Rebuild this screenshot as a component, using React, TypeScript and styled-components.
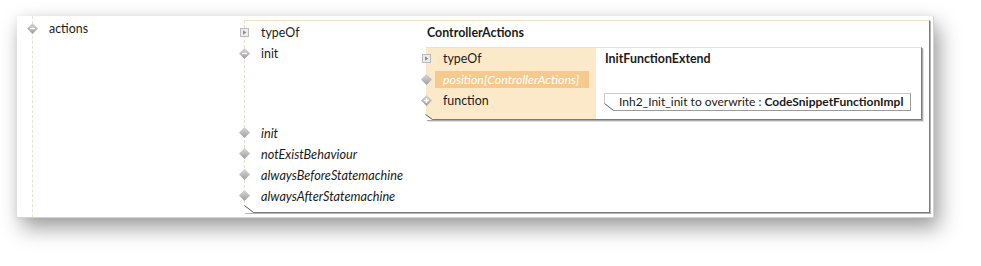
import styled, { createGlobalStyle } from 'styled-components';

const GlobalStyle = createGlobalStyle`
  html, body { margin: 0; padding: 0; background: #fff; }
  body {
    font-family: Lato, "Open Sans", sans-serif;
    font-size: 12.4px;
    color: #1b1b1b;
  }
`;

type Mark = 'minus' | 'plus' | 'none';

const IconBox = styled.span<{ $gap: number }>`
  display: flex;
  flex: none;
  width: 11px;
  height: 11px;
  margin-right: ${p => p.$gap}px;
`;

const Diamond = ({ mark = 'none' }: { mark?: Mark }) => (
  <svg width="11" height="11" viewBox="0 0 11 11">
    <defs>
      <linearGradient id="dia" x1="0" y1="0" x2="0" y2="1">
        <stop offset="0" stopColor="#d6d6d6" />
        <stop offset="0.5" stopColor="#bdbdbd" />
        <stop offset="1" stopColor="#9a9a9a" />
      </linearGradient>
    </defs>
    <polygon points="5.5,0 11,5.5 5.5,11 0,5.5" fill="url(#dia)" />
    {mark !== 'none' && <rect x="3" y="4.8" width="5" height="1.4" fill="#fff" />}
    {mark === 'plus' && <rect x="4.8" y="3" width="1.4" height="5" fill="#fff" />}
  </svg>
);

const TypeIcon = () => (
  <svg width="11" height="11" viewBox="0 0 11 11">
    <rect x="1.5" y="1.5" width="8" height="8" fill="#ececec" stroke="#bababa" />
    <polygon points="4,3.2 7.4,5.5 4,7.8" fill="#8e8e8e" />
  </svg>
);

const CornerSvg = styled.svg`
  position: absolute;
  left: -1px;
  bottom: -1px;
`;

const Corner = ({ w, h }: { w: number; h: number }) => (
  <CornerSvg width={w + 1} height={h + 1}>
    <polygon points={`0,0 ${w + 1},${h + 1} 0,${h + 1}`} fill="#fff" />
    <line x1="0.5" y1="0.5" x2={w + 0.5} y2={h + 0.5} stroke="#5c5c5c" />
  </CornerSvg>
);

const Page = styled.div`
  width: 981px;
  height: 266px;
  box-sizing: border-box;
  padding: 16px 0 0 17px;
  overflow: hidden;
`;

const Frame = styled.div`
  display: flex;
  width: 917px;
  height: 202px;
  box-sizing: border-box;
  padding-right: 3px;
  background: #fff;
  border-right: 1px solid #d4d4d4;
  border-bottom: 1px solid #d4d4d4;
  box-shadow: 5px 10px 20px rgba(0, 0, 0, 0.38), 0 0 10px rgba(0, 0, 0, 0.06);
`;

const Outline = styled.div`
  display: flex;
  flex: none;
  width: 227px;
  box-sizing: border-box;
  padding-left: 15px;
`;

const Branch = styled.div`
  flex: 1;
  padding-top: 2px;
  border-left: 1px dashed #ebe1cf;
`;

const Row = styled.div<{ $shift: number }>`
  display: flex;
  align-items: center;
  height: 21px;
  margin-left: ${p => p.$shift}px;
  white-space: nowrap;
`;

const Name = styled.span<{ $italic?: boolean }>`
  font-style: ${p => (p.$italic ? 'italic' : 'normal')};
  font-size: ${p => (p.$italic ? '12.7px' : 'inherit')};
`;

const Feature = styled.div`
  position: relative;
  flex: 1;
  margin: 4px 0;
  padding: 1px 0 5px;
  border-top: 1px solid #f2e2c2;
  border-left: 1px dashed #eddcbd;
  border-right: 1px solid #7a7a7a;
  border-bottom: 1px solid #7a7a7a;
  box-shadow: 1px 1px 0 #b6b6b6;
`;

const Entry = styled.div`
  display: flex;
  align-items: flex-start;
`;

const Slot = styled(Row)`
  flex: none;
  width: 187px;
`;

const Value = styled.div`
  flex: 1;
  min-width: 0;
  padding-right: 7px;
`;

const TypeName = styled.div`
  height: 21px;
  line-height: 21px;
  padding-left: 1px;
  font-weight: 700;
  white-space: nowrap;
`;

const Instance = styled.div`
  position: relative;
  display: flex;
  margin: 4px 0 2px;
  border-top: 1px solid #efe0c6;
  border-right: 1px solid #7a7a7a;
  border-bottom: 1px solid #7a7a7a;
  box-shadow: 1px 1px 0 #a9a9a9, 2px 2px 0 #e0e0e0;
`;

const InstanceLabels = styled.div`
  flex: none;
  width: 170px;
  padding-bottom: 8px;
  background: #fce9c9;
`;

const SlotName = styled.span<{ $active?: boolean }>`
  box-sizing: border-box;
  width: 154px;
  height: 17px;
  line-height: 17px;
  padding: 0 8px;
  background: ${p => (p.$active ? '#f6c98e' : 'transparent')};
  color: ${p => (p.$active ? '#fff' : 'inherit')};
  font-style: ${p => (p.$active ? 'italic' : 'normal')};
`;

const InstanceBody = styled.div`
  flex: 1;
  padding-left: 8px;
  background: #fff;
`;

const Blank = styled.div`
  height: 21px;
`;

const Snippet = styled.div`
  position: relative;
  width: 307px;
  height: 18px;
  margin-top: 3px;
  box-sizing: border-box;
  padding-left: 14px;
  font-size: 12px;
  line-height: 16px;
  white-space: nowrap;
  border: 1px solid #cacaca;
  border-right-color: #9c9c9c;
  border-bottom-color: #9c9c9c;
`;

const Strong = styled.span`
  font-weight: 700;
`;

const lower = ['init', 'notExistBehaviour', 'alwaysBeforeStatemachine', 'alwaysAfterStatemachine'];

export default function App() {
  return (
    <>
      <GlobalStyle />
      <Page>
        <Frame>
          <Outline>
            <Branch>
              <Row $shift={-6}>
                <IconBox $gap={11}><Diamond mark="minus" /></IconBox>
                <Name>actions</Name>
              </Row>
            </Branch>
          </Outline>

          <Feature>
            <Entry>
              <Slot $shift={-6}>
                <IconBox $gap={11}><TypeIcon /></IconBox>
                <Name>typeOf</Name>
              </Slot>
              <Value><TypeName>ControllerActions</TypeName></Value>
            </Entry>

            <Entry>
              <Slot $shift={-6}>
                <IconBox $gap={11}><Diamond mark="minus" /></IconBox>
                <Name>init</Name>
              </Slot>
              <Value>
                <Instance>
                  <InstanceLabels>
                    <Row $shift={-5}>
                      <IconBox $gap={3}><TypeIcon /></IconBox>
                      <SlotName>typeOf</SlotName>
                    </Row>
                    <Row $shift={-5}>
                      <IconBox $gap={3}><Diamond /></IconBox>
                      <SlotName $active>position[ControllerActions]</SlotName>
                    </Row>
                    <Row $shift={-5}>
                      <IconBox $gap={3}><Diamond mark="plus" /></IconBox>
                      <SlotName>function</SlotName>
                    </Row>
                  </InstanceLabels>
                  <InstanceBody>
                    <TypeName>InitFunctionExtend</TypeName>
                    <Blank />
                    <Snippet>
                      Inh2_Init_init to overwrite : <Strong>CodeSnippetFunctionImpl</Strong>
                      <Corner w={9} h={7} />
                    </Snippet>
                  </InstanceBody>
                  <Corner w={7} h={5} />
                </Instance>
              </Value>
            </Entry>

            {lower.map(name => (
              <Entry key={name}>
                <Slot $shift={-6}>
                  <IconBox $gap={11}><Diamond /></IconBox>
                  <Name $italic>{name}</Name>
                </Slot>
              </Entry>
            ))}
            <Corner w={9} h={7} />
          </Feature>
        </Frame>
      </Page>
    </>
  );
}
